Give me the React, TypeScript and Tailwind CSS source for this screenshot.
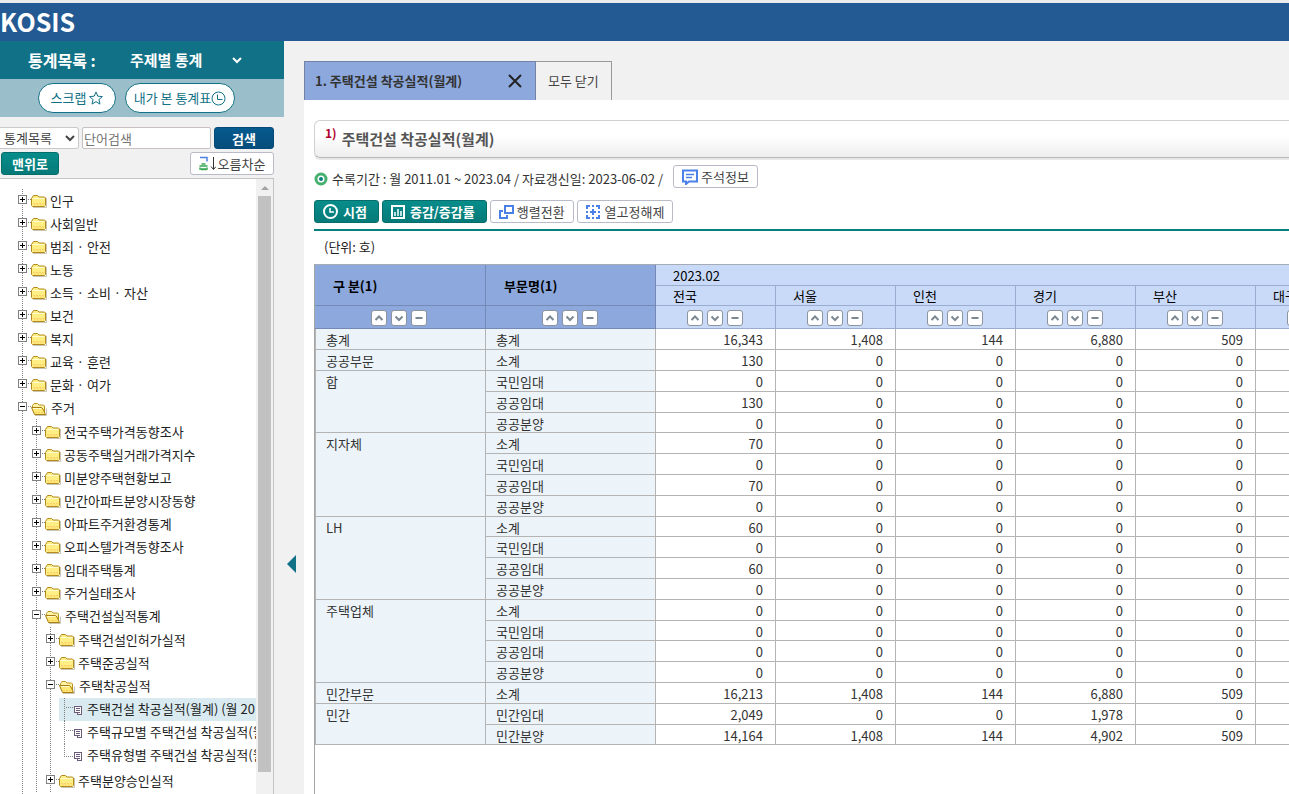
import { useState, type ReactNode } from "react";

type Node = { name: string; children?: Node[]; leaf?: boolean; active?: boolean };

const folders = (...names: string[]): Node[] => names.map((name) => ({ name }));

const tree: Node[] = [
  ...folders("인구", "사회일반", "범죄 · 안전", "노동", "소득 · 소비 · 자산", "보건", "복지", "교육 · 훈련", "문화 · 여가"),
  {
    name: "주거",
    children: [
      ...folders(
        "전국주택가격동향조사",
        "공동주택실거래가격지수",
        "미분양주택현황보고",
        "민간아파트분양시장동향",
        "아파트주거환경통계",
        "오피스텔가격동향조사",
        "임대주택통계",
        "주거실태조사",
      ),
      {
        name: "주택건설실적통계",
        children: [
          ...folders("주택건설인허가실적", "주택준공실적"),
          {
            name: "주택착공실적",
            children: [
              { name: "주택건설 착공실적(월계) (월 20", leaf: true, active: true },
              { name: "주택규모별 주택건설 착공실적(월", leaf: true },
              { name: "주택유형별 주택건설 착공실적(월", leaf: true },
            ],
          },
          ...folders("주택분양승인실적"),
        ],
      },
    ],
  },
];

const regions = ["전국", "서울", "인천", "경기", "부산", "대구"];

const zero = ["0", "0", "0", "0", "0"];
const groups: { name: string; rows: [string, string[]][] }[] = [
  { name: "총계", rows: [["총계", ["16,343", "1,408", "144", "6,880", "509"]]] },
  { name: "공공부문", rows: [["소계", ["130", "0", "0", "0", "0"]]] },
  {
    name: "합",
    rows: [
      ["국민임대", zero],
      ["공공임대", ["130", "0", "0", "0", "0"]],
      ["공공분양", zero],
    ],
  },
  {
    name: "지자체",
    rows: [
      ["소계", ["70", "0", "0", "0", "0"]],
      ["국민임대", zero],
      ["공공임대", ["70", "0", "0", "0", "0"]],
      ["공공분양", zero],
    ],
  },
  {
    name: "LH",
    rows: [
      ["소계", ["60", "0", "0", "0", "0"]],
      ["국민임대", zero],
      ["공공임대", ["60", "0", "0", "0", "0"]],
      ["공공분양", zero],
    ],
  },
  {
    name: "주택업체",
    rows: [
      ["소계", zero],
      ["국민임대", zero],
      ["공공임대", zero],
      ["공공분양", zero],
    ],
  },
  { name: "민간부문", rows: [["소계", ["16,213", "1,408", "144", "6,880", "509"]]] },
  {
    name: "민간",
    rows: [
      ["민간임대", ["2,049", "0", "0", "1,978", "0"]],
      ["민간분양", ["14,164", "1,408", "144", "4,902", "509"]],
    ],
  },
];

function Expander({ open }: { open: boolean }) {
  return (
    <svg width="13" height="23" viewBox="0 0 13 23" shapeRendering="crispEdges">
      <rect x="0.5" y="6.5" width="8" height="8" fill="#fff" stroke="#808080" />
      <path d={open ? "M2 10.5h5" : "M2 10.5h5M4.5 8v5"} stroke="#000" fill="none" />
      <path d="M10 10.5h1M12 10.5h1" stroke="#808080" />
    </svg>
  );
}

function Folder({ open }: { open: boolean }) {
  return (
    <svg width="16" height="23" viewBox="0 0 16 23" fill="none">
      {open ? (
        <>
          <path d="M4 19.5h11.500v-7" stroke="#c9c5b4" />
          <path d="M1.500 12V9.500l1.500-2h3.500l1.500 1.500h4.500l1 1v7" fill="#fff3a6" stroke="#bd9320" />
          <path d="M.5 11.500h10l1.500 1.500 2.500 5.500h-11z" fill="#ffe873" stroke="#a87c10" />
          <path d="M2 12.500h8" stroke="#fffcd2" />
          <path d="M4 16.500h8" stroke="#f7cd63" strokeDasharray="2 1" />
        </>
      ) : (
        <>
          <path d="M2 18.500h13.500V9" stroke="#c9c5b4" />
          <path d="M.5 16.500v-7l1-1.500 1-1.500h4l1.500 1.500h5.500l1 1v7.500l-1 1h-12z" fill="#ffee84" stroke="#b48a1c" />
          <path d="M1.500 9.500h12" stroke="#fffcd2" />
          <path d="M2 14.500h11M3 16h10" stroke="#f9cf66" strokeDasharray="2 1" />
        </>
      )}
    </svg>
  );
}

function LeafRow({ node, last }: { node: Node; last: boolean }) {
  return (
    <li className={node.active ? "flex h-[23px] bg-[#d9ebf1]" : "flex h-[23px]"}>
      <svg className="shrink-0" width="28" height="23" viewBox="0 0 28 23" fill="none" shapeRendering="crispEdges">
        <path d={last ? "M5.5 0v13" : "M5.5 0v23"} stroke="#808080" strokeDasharray="1 1" />
        <path d={last ? "M7 12.5h8" : "M7 9.5h8"} stroke="#808080" strokeDasharray="1 1" />
        <path d="M15.5 8.5h7v8h-4v-2h-3z" fill="#fff" stroke="#6b5a78" />
        <path d="M17 10.5h4M17 12.5h4M19 14.5h2" stroke="#6b5a78" />
      </svg>
      <a href="#table" className="whitespace-nowrap leading-[22px]">
        {node.name}
      </a>
    </li>
  );
}

function FolderRow({ node }: { node: Node }) {
  const [open, setOpen] = useState(Boolean(node.children));
  const leaves = node.children?.[0].leaf;
  return (
    <li>
      <div className="-ml-[5px] flex h-[23px]">
        <button type="button" aria-label={node.name} aria-expanded={open} onClick={() => setOpen(!open)} className="shrink-0">
          <Expander open={open} />
        </button>
        <Folder open={open} />
        <a href="#list" className={open ? "ml-1 whitespace-nowrap leading-6" : "ml-[3px] whitespace-nowrap leading-6"}>
          {node.name}
        </a>
      </div>
      {open && node.children && (
        <ul className={leaves ? "ml-2 pt-px pb-0.5" : "ml-[13px] border-l border-dotted border-[#808080] pt-px"}>
          {node.children.map((child, i) =>
            child.leaf ? (
              <LeafRow key={child.name} node={child} last={i === node.children!.length - 1} />
            ) : (
              <FolderRow key={child.name} node={child} />
            ),
          )}
        </ul>
      )}
    </li>
  );
}

function Chevron({ className }: { className: string }) {
  return (
    <svg className={className} width="10" height="7" viewBox="0 0 10 7" fill="none" stroke="currentColor" strokeWidth="2">
      <path d="M1 1l4 4 4-4" />
    </svg>
  );
}

function SortButtons() {
  const shapes: [string, string][] = [
    ["올림", "M3.5 9L7 5.5 10.5 9"],
    ["내림", "M3.5 5.5L7 9l3.5-3.5"],
    ["닫기", "M3.5 7h7"],
  ];
  return (
    <div className="flex justify-center gap-1 pt-0.5 pr-0.5">
      {shapes.map(([label, d]) => (
        <button
          key={label}
          type="button"
          aria-label={label}
          className="flex size-4 items-center justify-center rounded-[3px] border border-[#8d949e] bg-white"
        >
          <svg width="14" height="14" viewBox="0 0 14 14" fill="none" stroke="#7c8794" strokeWidth="2" className="shrink-0">
            <path d={d} />
          </svg>
        </button>
      ))}
    </div>
  );
}

function TealButton({ children }: { children: ReactNode }) {
  return (
    <button
      type="button"
      className="flex h-[23px] items-center gap-[5px] rounded-[3px] border border-[#056e6c] bg-linear-to-b from-[#078d8b] to-[#067a78] pr-[11px] pl-2 font-bold leading-[21px] text-white"
    >
      {children}
    </button>
  );
}

function PlainButton({ children }: { children: ReactNode }) {
  return (
    <button
      type="button"
      className="flex h-[23px] items-center gap-[3px] rounded-[3px] border border-[#b9bcc8] bg-white px-2 leading-[21px] text-[#444]"
    >
      {children}
    </button>
  );
}

function Sidebar() {
  return (
    <aside className="flex w-[284px] shrink-0 flex-col">
      <div className="flex h-[38px] shrink-0 items-center bg-[#117186] pl-7 font-bold text-white">
        <label htmlFor="theme" className="w-[102px] text-[16px]">
          통계목록 :
        </label>
        <div className="relative">
          <select id="theme" className="w-[112px] appearance-none bg-transparent text-[15px] leading-[22px]">
            <option>주제별 통계</option>
          </select>
          <Chevron className="pointer-events-none absolute top-2 right-0" />
        </div>
      </div>
      <div className="flex h-[38px] shrink-0 items-center gap-[9px] bg-[#9bbfca] pl-[38px] text-[#117186]">
        <button type="button" className="flex h-[30px] w-[78px] items-center justify-center gap-[3px] rounded-full border border-[#117186] bg-white">
          스크랩
          <svg width="14" height="14" viewBox="0 0 14 14" fill="none" stroke="currentColor">
            <path d="M7 1l1.8 4.2 4.6.4-3.5 3 1.1 4.5L7 10.7 3 13.1l1.1-4.5-3.5-3 4.6-.4z" />
          </svg>
        </button>
        <button type="button" className="flex h-[30px] w-[110px] items-center justify-center whitespace-nowrap rounded-full border border-[#117186] bg-white">
          내가 본 통계표
          <svg width="15" height="15" viewBox="0 0 15 15" fill="none" stroke="currentColor" className="shrink-0">
            <circle cx="7.5" cy="7.5" r="6.5" />
            <path d="M6.5 3.5v5h5" />
          </svg>
        </button>
      </div>

      <form className="mr-[10px] mt-[10px] flex shrink-0 gap-[3px]" onSubmit={(e) => e.preventDefault()}>
        <div className="relative">
          <select
            aria-label="검색 범위"
            className="h-[22px] w-[79px] appearance-none rounded-r-[3px] border border-l-0 border-[#c9c9c9] bg-white pl-1 leading-5 text-[#444]"
          >
            <option>통계목록</option>
          </select>
          <Chevron className="pointer-events-none absolute top-2 right-1 text-[#444]" />
        </div>
        <input
          aria-label="단어검색"
          placeholder="단어검색"
          className="h-[22px] min-w-0 flex-1 rounded-[2px] border border-[#c8bfc1] bg-white px-px leading-5 placeholder:text-[#757575]"
        />
        <button
          type="submit"
          className="h-[22px] w-[60px] rounded-[3px] border border-[#064a78] bg-linear-to-b from-[#065a8e] to-[#064d7c] font-bold leading-[21px] text-white"
        >
          검색
        </button>
      </form>
      <div className="mr-[10px] mt-[3px] flex shrink-0 justify-between pl-px">
        <button
          type="button"
          className="h-[23px] w-[58px] rounded-[3px] border border-[#056e6c] bg-linear-to-b from-[#078d8b] to-[#067a78] font-bold leading-[21px] text-white"
        >
          맨위로
        </button>
        <button
          type="button"
          className="flex h-[23px] w-[84px] items-center justify-center gap-0.5 rounded-[3px] border border-[#b9bcc8] bg-white leading-[21px] text-[#444]"
        >
          <svg width="17" height="15" viewBox="0 0 17 15" fill="none">
            <path d="M1 1.5h7v4" stroke="#4a80e8" strokeWidth="1.5" />
            <path d="M2.5 8h4M.5 10h8M2 13.5h5.5M1 11.500v1.500h7v-1.500" stroke="#35a854" strokeWidth="1.5" />
            <path d="M14.5 1v12M12 10.500l2.500 3 2.500-3" stroke="#333" />
          </svg>
          오름차순
        </button>
      </div>

      <nav className="mr-[10px] mt-[3px] flex min-h-0 flex-1 border-t border-r border-[#c4c4c4] bg-white" aria-label="통계목록">
        <div className="min-w-0 flex-1 overflow-hidden pt-[10px]">
          <ul className="ml-[22px] border-l border-dotted border-[#808080] pb-10 text-[#222]">
            {tree.map((node) => (
              <FolderRow key={node.name} node={node} />
            ))}
          </ul>
        </div>
        <div className="flex w-[17px] flex-col bg-[#f1f1f1] pb-[22px]">
          <svg width="17" height="17" viewBox="0 0 17 17" className="shrink-0">
            <path d="M5 11l4-4 4 4z" fill="#a3a3a3" />
          </svg>
          <div className="mr-0.5 ml-0.5 flex-1 bg-[#c1c1c1]" />
        </div>
      </nav>
    </aside>
  );
}

function StatTable() {
  let index = 0;
  return (
    <table id="table" className="w-[1061px] table-fixed border-separate border-spacing-0 border-t border-[#a5acb8]">
      <colgroup>
        <col className="w-[171px]" />
        <col className="w-[170px]" />
        {regions.map((r) => (
          <col key={r} className="w-[120px]" />
        ))}
      </colgroup>
      <thead className="text-left text-black">
        <tr className="h-[21px] leading-[18px]">
          {["구 분(1)", "부문명(1)"].map((h) => (
            <th key={h} rowSpan={2} className="border-r border-b border-[#7489b5] bg-[#8ca8dc] p-0 pt-0.5 pl-[18px] font-bold">
              {h}
            </th>
          ))}
          <th colSpan={6} className="border-b border-[#9aaccf] bg-[#c9daf8] p-0 pt-0.5 pl-[17px] font-normal">
            2023.02
          </th>
        </tr>
        <tr className="h-5 leading-[19px]">
          {regions.map((r) => (
            <th key={r} className="border-r border-b border-[#9aaccf] bg-[#c9daf8] p-0 pl-[17px] font-normal">
              {r}
            </th>
          ))}
        </tr>
        <tr className="h-[23px]">
          {[0, 1].map((i) => (
            <td key={i} className="border-r border-b border-[#7489b5] bg-[#8ca8dc] p-0">
              <SortButtons />
            </td>
          ))}
          {regions.map((r) => (
            <td key={r} className="border-r border-b border-[#9aaccf] bg-[#c9daf8] p-0">
              <SortButtons />
            </td>
          ))}
        </tr>
      </thead>
      <tbody className="leading-[17px] text-[#333]">
        {groups.map((g) =>
          g.rows.map(([name, values], i) => (
            <tr key={g.name + name} className={index++ % 5 === 4 ? "h-5" : "h-[21px]"}>
              {i === 0 && (
                <th
                  rowSpan={g.rows.length}
                  className="border-r border-b border-l border-[#b4b4b4] bg-[#ecf3f9] p-0 pt-0.5 pl-[10px] text-left align-top font-normal"
                >
                  {g.name}
                </th>
              )}
              <th className="border-r border-b border-[#b4b4b4] bg-[#ecf3f9] p-0 pt-0.5 pl-[10px] text-left align-top font-normal">
                {name}
              </th>
              {regions.map((r, c) => (
                <td key={r} className="border-r border-b border-[#b4b4b4] bg-white p-0 pt-0.5 pr-3 text-right align-top">
                  {values[c]}
                </td>
              ))}
            </tr>
          )),
        )}
      </tbody>
    </table>
  );
}

function Content() {
  return (
    <main className="flex min-w-0 flex-1 flex-col overflow-hidden pt-5">
      <div className="flex h-[39px] shrink-0">
        <div className="flex w-[232px] items-center justify-between border border-b-0 border-[#7382a3] bg-[#8ca8dc] pr-[13px] pl-[10px] font-bold text-[#333]">
          1. 주택건설 착공실적(월계)
          <button type="button" aria-label="탭 닫기">
            <svg width="14" height="14" viewBox="0 0 14 14" stroke="#222" strokeWidth="2">
              <path d="M1 1l12 12M13 1L1 13" />
            </svg>
          </button>
        </div>
        <button type="button" className="border border-b-0 border-l-0 border-[#999] px-3 text-[#444]">
          모두 닫기
        </button>
      </div>
      <section className="flex min-h-0 flex-1 flex-col bg-white pt-5 pl-[10px]">
        <h1 className="flex h-[38px] shrink-0 items-center rounded-l-[6px] border border-r-0 border-b-[#b8b8b8] border-[#d0d0d0] bg-linear-to-b from-white from-40% to-[#eee] pl-[10px] text-[15px] font-bold text-[#555] shadow-[0_2px_0_#e8e8e8]">
          <sup className="mr-[5px] -top-1.5 text-[12px] font-bold leading-4 text-[#b0002a]">1)</sup>
          주택건설 착공실적(월계)
        </h1>
        <div className="mt-[7px] flex h-[23px] shrink-0 items-center text-[#333]">
          <svg width="14" height="14" viewBox="0 0 14 14" className="mt-1 mr-1 shrink-0">
            <circle cx="7" cy="7" r="5" fill="#fff" stroke="#46b06e" strokeWidth="3" />
            <circle cx="7" cy="7" r="2" fill="#087f7d" />
          </svg>
          <p className="mr-[10px] pt-1 leading-5">수록기간 : 월 2011.01 ~ 2023.04 / 자료갱신일: 2023-06-02 /</p>
          <PlainButton>
            <svg width="16" height="16" viewBox="0 0 16 16" fill="none" stroke="#4a80e8" strokeWidth="2">
              <path d="M1 1.5h14v11H7l-3 2.5v-2.5H1z" />
              <path d="M4 5.5h8M4 8.5h6" strokeWidth="1.5" />
            </svg>
            주석정보
          </PlainButton>
        </div>
        <div className="mt-3 flex shrink-0 gap-[3px] border-b-2 border-[#067f7d] pb-[6px]">
          <TealButton>
            <svg width="15" height="15" viewBox="0 0 15 15" fill="none" stroke="#fff" strokeWidth="2">
              <circle cx="7.5" cy="7.5" r="6.5" />
              <path d="M7 4v4h4" strokeWidth="1.5" />
            </svg>
            시점
          </TealButton>
          <TealButton>
            <svg width="14" height="14" viewBox="0 0 14 14" fill="none" stroke="#fff" strokeWidth="2">
              <path d="M1 1h12v12H1z" />
              <path d="M4 7v4M7 4v7M10 6v5" strokeWidth="1.5" />
            </svg>
            증감/증감률
          </TealButton>
          <PlainButton>
            <svg width="15" height="14" viewBox="0 0 15 14" fill="none" stroke="#4a80e8" strokeWidth="2">
              <path d="M6 1h8v7H6zM4 6H1v7h7v-3" />
            </svg>
            행렬전환
          </PlainButton>
          <PlainButton>
            <svg width="16" height="14" viewBox="0 0 16 14" fill="none" stroke="#4a80e8" strokeWidth="2">
              <path d="M1 4V1h3M10 1h3v3M13 10v3h-3M4 13H1v-3M7 4v6M4 7h6M7 0v2M7 12v2M0 7h2M12 7h2" />
            </svg>
            열고정해제
          </PlainButton>
        </div>
        <p className="shrink-0 pt-[6px] pb-[7px] pl-[10px] leading-5 text-[#222]">(단위: 호)</p>
        <div className="min-h-0 flex-1 overflow-hidden border-l border-[#a5a5a5]">
          <StatTable />
        </div>
      </section>
    </main>
  );
}

export default function App() {
  return (
    <div className="flex h-screen flex-col overflow-hidden bg-[#f1f1f1] font-['Noto_Sans_CJK_KR',sans-serif] text-[13px]">
      <header className="flex h-[41px] shrink-0 items-center border-t-3 border-[#ececec] bg-[#235a93] text-[25px] font-bold text-white">
        KOSIS
      </header>
      <div className="flex min-h-0 flex-1">
        <Sidebar />
        <button type="button" aria-label="목록 접기" className="flex w-5 shrink-0 items-center justify-end pt-[293px] pr-2">
          <svg width="9" height="18" viewBox="0 0 9 18">
            <path d="M9 0v18L0 9z" fill="#117186" />
          </svg>
        </button>
        <Content />
      </div>
    </div>
  );
}
